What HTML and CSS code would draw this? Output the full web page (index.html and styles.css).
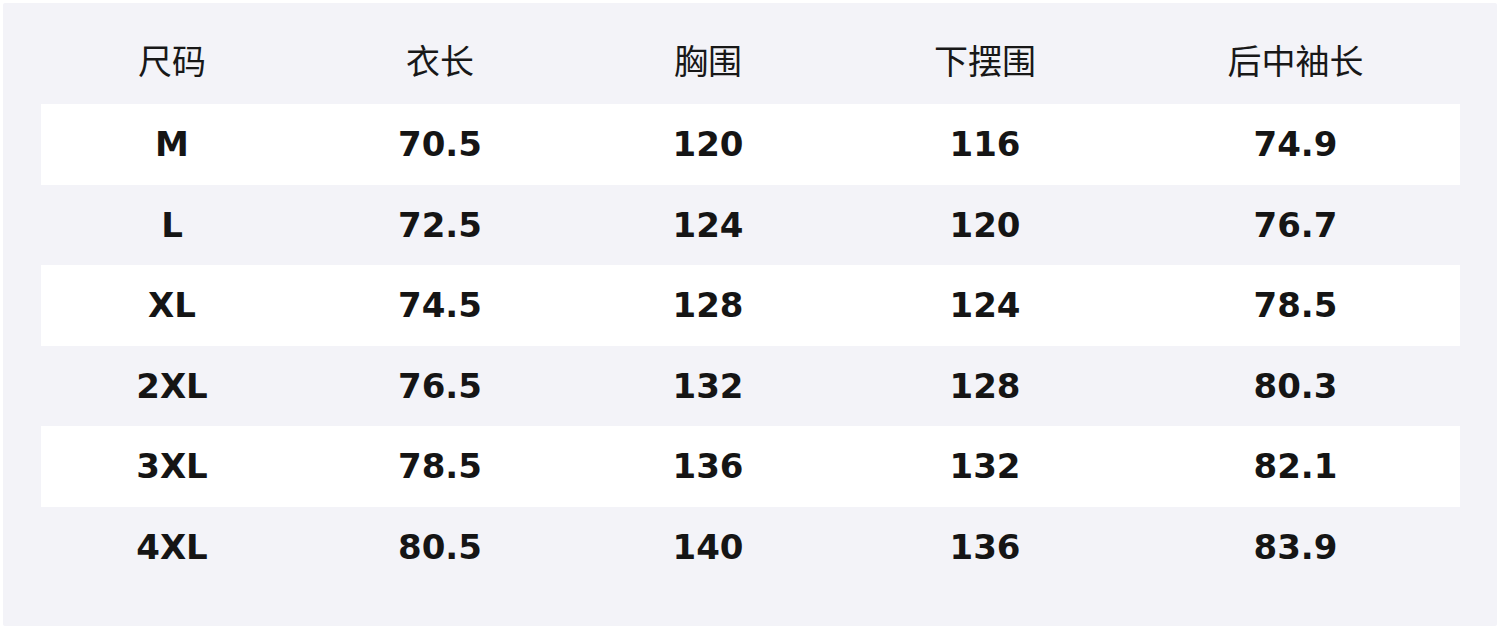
FILE: index.html
```html
<!DOCTYPE html>
<html lang="zh">
<head>
<meta charset="utf-8">
<link rel="stylesheet" href="styles.css">
</head>
<body>
<div class="panel">
  <div class="row head">
    <div class="c c1">尺码</div><div class="c c2">衣长</div><div class="c c3">胸围</div><div class="c c4">下摆围</div><div class="c c5">后中袖长</div>
  </div>
  <div class="row odd">
    <div class="c c1">M</div><div class="c c2">70.5</div><div class="c c3">120</div><div class="c c4">116</div><div class="c c5">74.9</div>
  </div>
  <div class="row">
    <div class="c c1">L</div><div class="c c2">72.5</div><div class="c c3">124</div><div class="c c4">120</div><div class="c c5">76.7</div>
  </div>
  <div class="row odd">
    <div class="c c1">XL</div><div class="c c2">74.5</div><div class="c c3">128</div><div class="c c4">124</div><div class="c c5">78.5</div>
  </div>
  <div class="row">
    <div class="c c1">2XL</div><div class="c c2">76.5</div><div class="c c3">132</div><div class="c c4">128</div><div class="c c5">80.3</div>
  </div>
  <div class="row odd">
    <div class="c c1">3XL</div><div class="c c2">78.5</div><div class="c c3">136</div><div class="c c4">132</div><div class="c c5">82.1</div>
  </div>
  <div class="row">
    <div class="c c1">4XL</div><div class="c c2">80.5</div><div class="c c3">140</div><div class="c c4">136</div><div class="c c5">83.9</div>
  </div>
</div>
</body>
</html>
```
FILE: styles.css
```css
html, body {
  margin: 0;
  padding: 0;
  background: #ffffff;
}
.panel {
  margin: 3px;
  height: 623px;
  box-sizing: border-box;
  background: #f3f3f8;
  border-radius: 2px;
  padding: 0 37px 0 38px;
  display: flex;
  flex-direction: column;
}
.row {
  display: flex;
  height: 80.5px;
  align-items: center;
  font-family: "DejaVu Sans", "Noto Sans CJK SC", sans-serif;
  font-weight: 700;
  font-size: 34px;
  color: #151515;
}
.row.head {
  height: 101px;
  font-family: "Noto Sans CJK SC", sans-serif;
  font-weight: 400;
  font-size: 34px;
  color: #181818;
  padding-top: 12px;
  box-sizing: border-box;
}
.row.odd {
  background: #ffffff;
}
.c {
  text-align: center;
}
.c1 { width: 262px; }
.c2 { width: 274px; }
.c3 { width: 262px; }
.c4 { width: 292px; }
.c5 { width: 329px; }
```
